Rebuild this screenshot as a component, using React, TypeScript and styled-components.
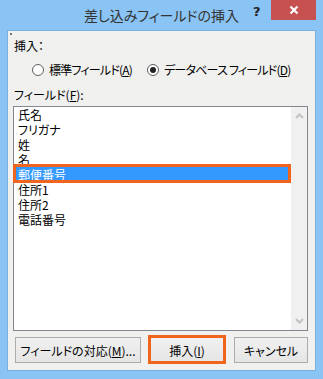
import React, { FunctionComponent } from 'react';
import styled, { createGlobalStyle } from 'styled-components';

const GlobalStyle = createGlobalStyle`
	html, body {
		margin: 0;
		padding: 0;
		background: #8ac4f4;
	}
	body {
		font-family: "Noto Sans CJK JP", "Noto Sans", sans-serif;
		font-feature-settings: "palt";
	}
`;

const Window = styled.div`
	position: relative;
	width: 323px;
	height: 379px;
	background: #8ac4f4;
	display: flex;
	flex-direction: column;
	box-sizing: border-box;
`;

const TitleBar = styled.div`
	position: relative;
	height: 30px;
	display: flex;
	align-items: center;
	justify-content: center;
	font-size: 14px;
	color: #333;
`;

const HelpGlyph = styled.span`
	position: absolute;
	left: 253px;
	top: 4px;
	font-family: "DejaVu Sans", sans-serif;
	font-weight: bold;
	font-size: 13px;
	color: #222;
`;

const CloseButton = styled.div`
	position: absolute;
	left: 271px;
	top: 0;
	width: 45px;
	height: 20px;
	background: #c75050;
	display: flex;
	align-items: center;
	justify-content: center;
`;

const Client = styled.div`
	position: relative;
	margin: 0 7px 8px 7px;
	flex: 1;
	border: 1px solid #7bb0de;
	background: #f0f0ef;
	padding: 7px 7px 7px 5px;
	display: flex;
	flex-direction: column;
	font-size: 12px;
	line-height: 15px;
	color: #000;
	white-space: nowrap;

	&::before {
		content: '';
		position: absolute;
		left: 2px;
		top: 2px;
		width: 2px;
		height: 2px;
		background: #777;
	}
`;

const Label = styled.div<{ $gap: number }>`
	height: 15px;
	padding-left: 1px;
	margin-bottom: ${p => p.$gap}px;
`;

const RadioRow = styled.div`
	height: 15px;
	display: flex;
	align-items: center;
	padding-left: 19px;
	margin-bottom: 10px;
	letter-spacing: -0.8px;
`;

const RadioOption = styled.label`
	display: flex;
	align-items: center;
	flex-shrink: 0;
	gap: 5px;
	margin-right: 15px;
`;

const RadioCircle = styled.span<{ $checked?: boolean }>`
	width: 12px;
	height: 12px;
	flex-shrink: 0;
	box-sizing: border-box;
	border-radius: 50%;
	border: 1px solid #5e5e5e;
	background: #fff;
	display: flex;
	align-items: center;
	justify-content: center;

	&::after {
		content: '';
		display: ${p => (p.$checked ? 'block' : 'none')};
		width: 6px;
		height: 6px;
		border-radius: 50%;
		background: #222;
	}
`;

const ListBox = styled.div`
	height: 225px;
	box-sizing: border-box;
	border: 1px solid #828790;
	background: #fff;
	display: flex;
	margin-bottom: 6px;
`;

const Items = styled.ul`
	flex: 1;
	list-style: none;
	margin: 0;
	padding: 0 0 0 1px;
`;

const Item = styled.li<{ $selected?: boolean }>`
	position: relative;
	height: 15px;
	padding-left: 3px;
	background: ${p => (p.$selected ? '#3399ff' : 'transparent')};
	color: ${p => (p.$selected ? '#fff' : '#000')};

	&::after {
		content: '';
		display: ${p => (p.$selected ? 'block' : 'none')};
		position: absolute;
		left: -2px;
		right: 0;
		top: -3px;
		bottom: -1px;
		border: 3px solid #f0641e;
	}
`;

const ScrollBar = styled.div`
	width: 16px;
	background: #f0f0f0;
	display: flex;
	flex-direction: column;
	justify-content: space-between;
	align-items: center;
	padding: 6px 0;
`;

const ButtonRow = styled.div`
	display: flex;
	padding-left: 2px;
	height: 26px;
`;

const Button = styled.div<{ $width: number; $marked?: boolean; $gap?: number }>`
	position: relative;
	width: ${p => p.$width}px;
	margin-left: ${p => p.$gap || 0}px;
	box-sizing: border-box;
	border: 1px solid #acacac;
	background: linear-gradient(#f0f0f0, #e5e5e5);
	display: flex;
	align-items: center;
	justify-content: center;
	font-size: 12px;

	&::after {
		content: '';
		display: ${p => (p.$marked ? 'block' : 'none')};
		position: absolute;
		left: -3px;
		right: -3px;
		top: -3px;
		bottom: -2px;
		border: 3px solid #f0641e;
	}
`;

const Key = styled.span`
	text-decoration: underline;
	text-underline-offset: 1px;
`;

const Chevron: FunctionComponent<{ down?: boolean }> = ({ down }) => (
	<svg width="9" height="6" viewBox="0 0 9 6">
		<path
			d={down ? 'M1 1 L4.5 4.5 L8 1' : 'M1 5 L4.5 1.5 L8 5'}
			fill="none"
			stroke="#c2c2c2"
			strokeWidth="2"
		/>
	</svg>
);

const fields = ['氏名', 'フリガナ', '姓', '名', '郵便番号', '住所1', '住所2', '電話番号'];

const App: FunctionComponent = () => {
	return (
		<Window>
			<GlobalStyle />
			<TitleBar>
				差し込みフィールドの挿入
				<HelpGlyph>?</HelpGlyph>
				<CloseButton>
					<svg width="10" height="10" viewBox="0 0 10 10">
						<path d="M1.5 1.5 L8.5 8.5 M8.5 1.5 L1.5 8.5" stroke="#fff" strokeWidth="2.2" />
					</svg>
				</CloseButton>
			</TitleBar>
			<Client>
				<Label $gap={9}>挿入：</Label>
				<RadioRow>
					<RadioOption>
						<RadioCircle />
						<span>標準フィールド(<Key>A</Key>)</span>
					</RadioOption>
					<RadioOption>
						<RadioCircle $checked />
						<span>データベース フィールド(<Key>D</Key>)</span>
					</RadioOption>
				</RadioRow>
				<Label $gap={4}>フィールド(<Key>F</Key>):</Label>
				<ListBox>
					<Items>
						{fields.map((f, i) => (
							<Item key={f} $selected={i === 4}>{f}</Item>
						))}
					</Items>
					<ScrollBar>
						<Chevron />
						<Chevron down />
					</ScrollBar>
				</ListBox>
				<ButtonRow>
					<Button $width={126}>フィールドの対応(<Key>M</Key>)...</Button>
					<Button $width={74} $gap={9} $marked>挿入(<Key>I</Key>)</Button>
					<Button $width={74} $gap={10}>キャンセル</Button>
				</ButtonRow>
			</Client>
		</Window>
	);
};

export default App;
